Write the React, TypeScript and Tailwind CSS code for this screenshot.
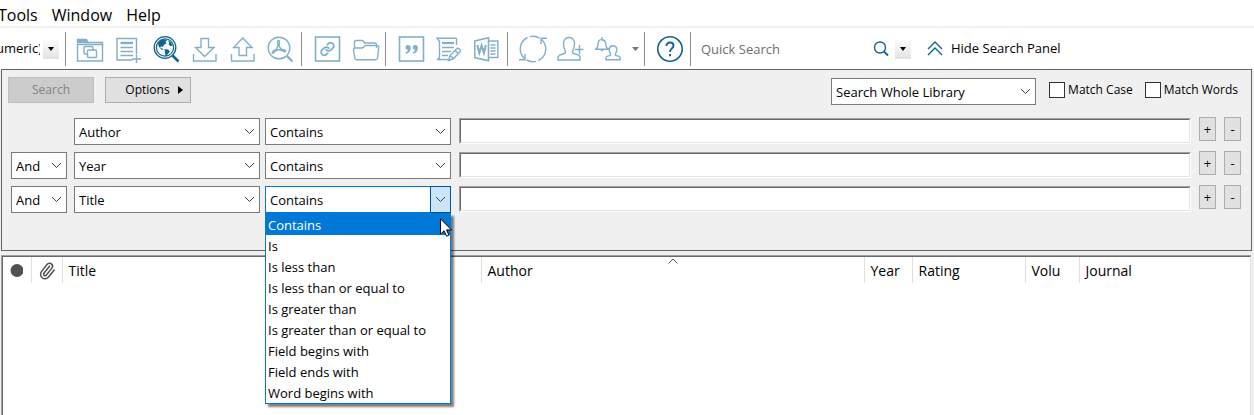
import React, { useState } from "react";
import { Link, Paperclip } from "lucide-react";

const fields = ["Author", "Year", "Title"];
const operators = [
  "Contains",
  "Is",
  "Is less than",
  "Is less than or equal to",
  "Is greater than",
  "Is greater than or equal to",
  "Field begins with",
  "Field ends with",
  "Word begins with",
];

function Icon({ children, strong = false }: { children: React.ReactNode; strong?: boolean }) {
  return (
    <svg
      viewBox="0 0 28 28"
      className={strong ? "size-7 text-[#0f6490]" : "size-7 text-[#82b0c8]"}
      fill="none"
      stroke="currentColor"
      strokeWidth="1.4"
      aria-hidden="true"
    >
      {children}
    </svg>
  );
}

function Tool({ label, strong, children }: { label: string; strong?: boolean; children: React.ReactNode }) {
  return (
    <button type="button" aria-label={label} className="block size-7 shrink-0">
      <Icon strong={strong}>{children}</Icon>
    </button>
  );
}

function Separator() {
  return <div className="h-[34px] w-px shrink-0 bg-[#8a8a8a]" />;
}

function DropButton({ label }: { label: string }) {
  return (
    <button
      type="button"
      aria-label={label}
      className="flex h-[21px] w-4 shrink-0 items-center justify-center bg-linear-to-b from-white to-[#e2e2e2]"
    >
      <svg viewBox="0 0 6 4" className="h-1 w-1.5" aria-hidden="true">
        <path d="M0 0h6L3 4z" fill="#000" />
      </svg>
    </button>
  );
}

function Select({
  label,
  options,
  initial,
  width,
  open = false,
}: {
  label: string;
  options: string[];
  initial: string;
  width: string;
  open?: boolean;
}) {
  const [value, setValue] = useState(initial);
  return (
    <div className={`relative h-[27px] shrink-0 ${width}`}>
      <select
        aria-label={label}
        value={value}
        onChange={(e) => setValue(e.target.value)}
        className={`size-full appearance-none border bg-white pl-1 pr-5 pt-0.5 text-[13px] leading-[23px] outline-none ${
          open ? "border-[#0078d7]" : "border-[#7a7a7a]"
        }`}
      >
        {options.map((o) => (
          <option key={o}>{o}</option>
        ))}
      </select>
      <span
        className={`pointer-events-none absolute inset-y-0 right-0 flex w-[21px] items-center justify-center ${
          open ? "border border-[#005499] bg-[#cce4f7]" : ""
        }`}
      >
        <svg viewBox="0 0 11 7" className="h-[7px] w-[11px]" fill="none" stroke="#404040" aria-hidden="true">
          <path d="M1 1l4.5 4.5L10 1" />
        </svg>
      </span>
      {open && (
        <ul
          role="listbox"
          aria-label="Operator choices"
          className="absolute inset-x-0 top-full z-10 border border-[#0078d7] bg-white text-[13px] shadow-[3px_3px_2px_rgba(0,0,0,0.5)]"
        >
          {options.map((o) => (
            <li
              key={o}
              role="option"
              aria-selected={o === value}
              className={`h-[21px] pl-0.5 leading-[23px] ${o === value ? "bg-[#0078d7] text-white" : ""}`}
            >
              {o}
            </li>
          ))}
        </ul>
      )}
      {open && (
        <svg
          viewBox="0 0 12 19"
          className="absolute left-[175px] top-8 z-20 h-[19px] w-3"
          aria-hidden="true"
        >
          <path
            d="M.5 .8v15.4l3.6-3.4 2.4 5.4 2.4-1-2.3-5.3h4.9z"
            fill="#fff"
            stroke="#000"
          />
        </svg>
      )}
    </div>
  );
}

function CriteriaRow({ field, first, open }: { field: string; first: boolean; open: boolean }) {
  return (
    <div className="flex items-start">
      {first ? (
        <div className="w-14 shrink-0" />
      ) : (
        <Select label="Combine with" options={["And", "Or", "Not"]} initial="And" width="w-14" />
      )}
      <div className="ml-[7px] flex gap-[5px]">
        <Select label="Field" options={fields} initial={field} width="w-[186px]" />
        <Select label="Operator" options={operators} initial="Contains" width="w-[186px]" open={open} />
      </div>
      <div className="ml-2 h-[26px] min-w-0 grow border border-b-white border-l-[#a0a0a0] border-r-white border-t-[#a0a0a0]">
        <input
          aria-label={`${field} search text`}
          className="block size-full border border-b-[#e3e3e3] border-l-[#696969] border-r-[#e3e3e3] border-t-[#696969] bg-white px-1 text-[13px] outline-none"
        />
      </div>
      <div className="-mt-px ml-2 flex gap-2 text-[13px] leading-5">
        <button type="button" aria-label="Add row" className="h-6 w-[17px] border border-[#adadad] bg-[#e1e1e1]">
          +
        </button>
        <button type="button" aria-label="Remove row" className="h-6 w-[17px] border border-[#adadad] bg-[#e1e1e1]">
          -
        </button>
      </div>
    </div>
  );
}

function Check({ label }: { label: string }) {
  return (
    <label className="flex items-center gap-[3px] text-[12px] leading-4">
      <input type="checkbox" className="size-4 appearance-none border border-[#333] bg-white checked:bg-[#0078d7]" />
      {label}
    </label>
  );
}

function Toolbar() {
  return (
    <div className="flex h-[41px] items-center overflow-hidden">
      <span className="mr-[3px] w-10 shrink-0 overflow-hidden whitespace-nowrap -indent-[4px] text-[13px]">umeric)</span>
      <DropButton label="Choose style" />
      <div className="ml-1.5 flex items-center">
        <Separator />
        <div className="ml-2.5 mr-[7px] flex gap-2.5">
          <Tool label="New group">
            <path d="M1.5 9.5h25V26h-25z" />
            <path d="M1.5 4.5h9l1.5 3H1.5z" fill="currentColor" />
            <path d="M12 7.5h14.5v3" />
            <rect x="8" y="11.5" width="9" height="7.5" rx="1" />
            <rect x="11.5" y="15" width="9" height="7.5" rx="1" fill="#fff" />
          </Tool>
          <Tool label="New reference">
            <path d="M18.500 25H3V3.500H22.500V19" />
            <path d="M6.500 8h12.500" strokeWidth="2.4" />
            <path d="M6.500 12.500h12.500M6.500 16.500h12.500M6.500 20.500h12.500M18 24h9M22.500 19.500v9" />
          </Tool>
          <Tool label="Online search" strong>
            <circle cx="13" cy="12.5" r="10.8" strokeWidth="1.3" />
            <circle cx="13" cy="12.5" r="8.6" strokeWidth="1.2" />
            <path
              d="M6 8c2-3 5-4 7-3.7l2 1-1.5 1.5 1 1.4-2.5 1.5-1.2 2.2-2-.6-.5 1.5 2 .8 1 1.600-1.600-.4-3-3.200zM16 5.500l3 2 1.500 3-1.800.8-2-1.500.4-2zM12.500 14l3.500.6 2 1.800-1.700 2.200-2 2.400-1-.2-.2-3z"
              fill="currentColor"
              stroke="none"
            />
            <path d="M20.5 20.5l6 6" strokeWidth="2.6" />
          </Tool>
          <Tool label="Import">
            <path d="M11 3.5h7.5v9H24l-9.300 9-9.200-9H11zM3.500 19v7H26v-7" />
          </Tool>
          <Tool label="Export">
            <path d="M11 20.500h7.500v-8H24L14.800 3 5.500 12.500H11zM3.500 19v7H26v-7" />
          </Tool>
          <Tool label="Find full text">
            <circle cx="13" cy="13" r="10.8" />
            <path d="M12 5.500c2-.5 1.500 3 1 5 1 3 3 4.500 5.500 4.500 2.500 1 .5 2.500-1.500 1l-4-1.500-4 1.500c-1.500 3-3.500 3-2.500 1 1-1.500 3-2 4-3 1-2 1.500-3.500 1.500-4.500-.5-1.500-.7-3 0-4z" />
            <path d="M21 21l5.500 5.500" strokeWidth="2.2" />
          </Tool>
        </div>
        <Separator />
        <div className="ml-3 mr-[5px] flex gap-2.5">
          <Tool label="Open link">
            <rect x="1.5" y="2" width="24" height="24" strokeWidth="1.6" />
            <Link x="6" y="6.5" width="15" height="15" strokeWidth="2.8" />
          </Tool>
          <Tool label="Open file">
            <path d="M2.500 13V7.500q0-2 2-2h5.500q1 0 1.500 1l1 1.500h10q2 0 2 2V13M3.500 13h7l3-2.500h11.500q2 0 1.800 1.800L25.500 23q-.2 1.800-2 1.800H4.500q-1.500 0-1.700-1.800l-1.300-8q-.2-2 2-2z" />
          </Tool>
        </div>
        <Separator />
        <div className="ml-3 mr-[5px] flex gap-2.5">
          <Tool label="Insert citation">
            <rect x="1.5" y="2" width="24" height="24" strokeWidth="1.6" />
            <path
              d="M7.500 12.200q0-2.300 2.500-2.300 2.700 0 2.700 3 0 4.500-4.700 5.900l-.5-1.300q2.200-.9 2.500-2.800-2.500 0-2.500-2.500zM14.700 12.200q0-2.300 2.500-2.300 2.700 0 2.700 3 0 4.500-4.700 5.900l-.5-1.300q2.200-.9 2.500-2.800-2.500 0-2.500-2.500z"
              fill="currentColor"
              stroke="none"
            />
          </Tool>
          <Tool label="Format bibliography">
            <path d="M20.500 10V4q0-.8-.8-.8H1L3.500 6.500V22q0 2.500-2.500 2.500h11" />
            <path d="M6 8h12" strokeWidth="2.2" />
            <path d="M6 12.5h12M6 16.500h9M6 20.500h6" />
            <path d="M12.500 25.500l1.500-5 7-7q1-.8 2.200.3l.8.8q1 1.200.2 2.200l-7 7zM19 15.500l3.500 3.500M14 20.500l3.500 3.300" />
          </Tool>
          <Tool label="Open Word processor">
            <path d="M.7 6L14.500 2.700v23L.7 22.500z" strokeWidth="1.6" />
            <path d="M14.500 6h9.300v16.500h-9.300M16.500 10h5M16.500 13h5M16.500 16h5M16.500 19h5" />
            <path d="M3.300 10l2 8 2.300-7.500 2.300 7.500 2-8" strokeWidth="2" />
          </Tool>
        </div>
        <Separator />
        <div className="ml-[11px] mr-[5px] flex items-center gap-2.5">
          <Tool label="Synchronize">
            <path d="M6.300 24.200A12.800 12.800 0 0 1 8.500 2.500M11 1.600A12.800 12.800 0 0 1 20.500 3.100M21.700 3.800A12.800 12.800 0 0 1 19.500 25.500M17 26.400A12.800 12.800 0 0 1 7.500 24.900M28 3.300h-6v5.700M0 24.700h6V19" />
          </Tool>
          <Tool label="Share library">
            <path d="M1 25v-3q1-2 4-2.700 4-1 3.500-3Q6 12 6.500 7.500 7.500 2.500 12 2.500t5.500 5Q18 12 15.500 16.300q-.5 2 3.500 3 3.500.7 4 2.700v3zM18 14.500h8.500M22.500 10v9" />
          </Tool>
          <div className="flex items-center">
            <Tool label="Activity feed">
              <path d="M.7 14.200h12.500q-2.500-1.500-2.300-5-.2-4-3.900-4.500T3 9.200q.2 3.500-2.300 5zM7 2v2.500M6 14.700q1 1.800 2 0M11 24.800v-2.200q.5-1.300 2.500-1.700 2.500-.5 2-2-1.500-2.500-1.300-5 .5-3.100 3.800-3.100t3.700 3.100q.2 2.500-1.300 5-.5 1.500 2 2 2.200.4 2.700 1.700v2.200z" />
            </Tool>
            <button type="button" aria-label="More sharing options" className="ml-[9px] w-[7px]">
              <svg viewBox="0 0 7 4" className="h-1 w-[7px]" aria-hidden="true">
                <path d="M0 0h7L3.500 4z" fill="#777" />
              </svg>
            </button>
          </div>
        </div>
        <Separator />
        <div className="ml-[11px] mr-1.5">
          <Tool label="Help" strong>
            <circle cx="14" cy="14" r="12.2" strokeWidth="1.6" />
            <path
              d="M10.500 11Q10.500 7.500 14 7.500t3.500 3.200q0 1.600-1.700 2.900Q14 15 14 17M14 19v2.200"
              strokeWidth="1.9"
            />
          </Tool>
        </div>
        <Separator />
      </div>
      <div className="ml-2.5 flex w-[210px] shrink-0 items-center">
        <input
          aria-label="Quick Search"
          placeholder="Quick Search"
          className="h-6 w-[172px] text-[13px] outline-none placeholder:text-[#6d6d6d]"
        />
        <button type="button" aria-label="Run quick search">
          <svg viewBox="0 0 16 16" className="size-4" fill="none" stroke="#0f6490" strokeWidth="1.4" aria-hidden="true">
            <circle cx="7" cy="6.5" r="5.5" />
            <path d="M11 10.5l4 4" strokeWidth="1.8" />
          </svg>
        </button>
        <div className="ml-1.5">
          <DropButton label="Quick search history" />
        </div>
      </div>
      <button type="button" className="ml-4 flex shrink-0 items-center gap-2 text-[13px]">
        <svg viewBox="0 0 16 15" className="h-[15px] w-4" fill="none" stroke="#0f6490" strokeWidth="1.4" aria-hidden="true">
          <path d="M1 8l7-7 7 7M1 14l7-7 7 7" />
        </svg>
        Hide Search Panel
      </button>
    </div>
  );
}

export default function App() {
  return (
    <div className="flex min-h-screen flex-col overflow-hidden bg-[#f0f0f0] font-['Open_Sans',sans-serif] text-black">
      <header className="bg-white">
        <nav className="-ml-0.5 flex h-7 gap-3.5 border-b-2 border-[#f0f0f0] text-[16px] leading-[30px]">
          <a href="#tools">Tools</a>
          <a href="#window">Window</a>
          <a href="#help">Help</a>
        </nav>
        <Toolbar />
      </header>

      <section aria-label="Search panel" className="ml-px mr-0.5 border border-[#646464] pb-[37px] pl-1.5 pr-2.5 pt-[7px]">
        <div className="flex items-start justify-between">
          <div className="flex gap-[11px] text-[12px]">
            <button type="button" disabled className="h-[26px] w-[86px] border border-[#bfbfbf] bg-[#ccc] text-[#838383]">
              Search
            </button>
            <button
              type="button"
              className="flex h-[26px] w-[86px] items-center justify-center gap-2 border border-[#adadad] bg-[#e1e1e1] pl-3"
            >
              Options
              <svg viewBox="0 0 5 8" className="h-2 w-[5px]" aria-hidden="true">
                <path d="M0 0l5 4-5 4z" fill="#000" />
              </svg>
            </button>
          </div>
          <div className="flex items-center gap-[13px] pr-[3px] pt-px">
            <Select label="Search scope" options={["Search Whole Library"]} initial="Search Whole Library" width="w-[205px]" />
            <div className="flex gap-3 pb-[3px]">
              <Check label="Match Case" />
              <Check label="Match Words" />
            </div>
          </div>
        </div>
        <div className="mt-[13px] flex flex-col gap-[7px] pl-[3px]">
          {fields.map((f, i) => (
            <CriteriaRow key={f} field={f} first={i === 0} open={i === 2} />
          ))}
        </div>
      </section>

      <main className="ml-px mr-[3px] mt-1 flex grow flex-col border-l border-t border-[#a0a0a0]">
        <div className="grow border border-b-0 border-l-[#696969] border-r-[#e3e3e3] border-t-[#696969] bg-white">
          <table className="w-full table-fixed text-left text-[14px]">
            <colgroup>
              <col className="w-7" />
              <col className="w-[31px]" />
              <col className="w-[419px]" />
              <col className="w-[383px]" />
              <col className="w-12" />
              <col className="w-[113px]" />
              <col className="w-[54px]" />
              <col />
            </colgroup>
            <thead>
              <tr className="*:h-[26px] *:border-r *:border-[#e0e0e0] *:p-0 *:pl-1.5 *:pt-0.5 *:font-normal *:leading-6 *:last:border-r-0">
                <th aria-label="Read status">
                  <svg viewBox="0 0 14 14" className="size-3.5" aria-hidden="true">
                    <circle cx="8" cy="6.5" r="6.5" fill="#505050" />
                  </svg>
                </th>
                <th aria-label="Attachment">
                  <Paperclip className="size-[18px] -rotate-6 text-[#505050]" strokeWidth={2} aria-hidden="true" />
                </th>
                <th>Title</th>
                <th className="relative">
                  Author
                  <svg
                    viewBox="0 0 10 6"
                    className="absolute left-1/2 top-px h-1.5 w-2.5 -translate-x-1/2"
                    fill="none"
                    stroke="#555"
                    aria-hidden="true"
                  >
                    <path d="M.5 5.5L5 1l4.500 4.500" />
                  </svg>
                </th>
                <th>Year</th>
                <th>Rating</th>
                <th>Volu</th>
                <th>Journal</th>
              </tr>
            </thead>
            <tbody />
          </table>
        </div>
      </main>
    </div>
  );
}
